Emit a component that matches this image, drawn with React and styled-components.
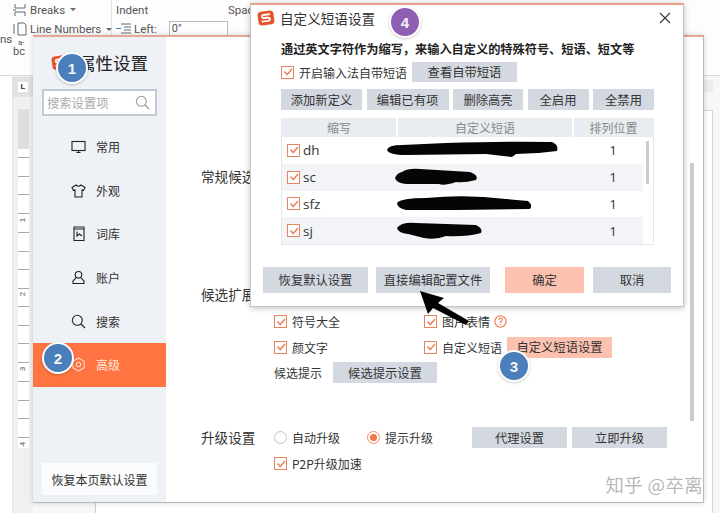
import React from "react";
import styled, { createGlobalStyle } from "styled-components";

const CJK = `"Noto Sans CJK SC", "Noto Sans", sans-serif`;

const GlobalStyle = createGlobalStyle`
  * { box-sizing: border-box; }
  html, body { margin: 0; padding: 0; background: #fff; overflow: hidden; }
  body { font-family: ${CJK}; }
`;

const Desktop = styled.div`
  position: relative;
  width: 720px;
  height: 513px;
  overflow: hidden;
  display: flex;
  flex-direction: column;
  background: #f7f7f7;
`;

/* word window behind the dialogs */
const Ribbon = styled.div`
  display: flex;
  height: 76px;
  flex-shrink: 0;
  background: #fdfdfd;
  border-bottom: 1px solid #dcdcdc;
  font-family: Roboto, sans-serif;
  font-size: 11.5px;
  color: #555;
`;

const RibbonEdge = styled.div`
  width: 13px;
  padding-top: 32px;
  line-height: 14px;
`;

const RibbonGroup = styled.div`
  width: ${(p) => p.$w}px;
  padding-left: ${(p) => p.$pad || 0}px;
  border-right: ${(p) => (p.$line ? "1px solid #e2e2e2" : "none")};
  display: flex;
  flex-direction: column;
`;

const RibbonRow = styled.div`
  height: 19.5px;
  display: flex;
  align-items: center;
  gap: 3px;
  white-space: nowrap;
  & svg { flex-shrink: 0; }
`;

const Caret = styled.span`
  width: 0;
  height: 0;
  margin-left: 2px;
  border-left: 3px solid transparent;
  border-right: 3px solid transparent;
  border-top: 3px solid #666;
`;

const HyphenMark = styled.div`
  & span { display: block; }
  & span:first-child { padding-left: 5px; font-size: 8px; line-height: 8px; }
  & span:last-child { font-size: 11px; line-height: 10px; }
`;

const SpinInput = styled.div`
  width: 61px;
  height: 16px;
  margin-left: 9px;
  border: 1px solid #bbb;
  background: #fff;
  padding-left: 2px;
  line-height: 14px;
  font-size: 11px;
`;

const Work = styled.div`
  flex: 1;
  display: flex;
`;

const Gutter = styled.div`
  width: 13px;
  border-right: 1px solid #e4e4e4;
  background: #fff;
`;

const Ruler = styled.div`
  width: 20px;
  display: flex;
  flex-direction: column;
  align-items: center;
  background: #f0f0f0;
`;

const RulerCorner = styled.div`
  width: 100%;
  height: 20px;
  margin-top: 1px;
  background: #e2e2e2;
  display: flex;
  align-items: center;
  justify-content: center;
  & span {
    width: 10px;
    height: 10px;
    background: #fff;
    font: bold 8px/10px "Liberation Sans", sans-serif;
    text-align: center;
    color: #333;
  }
`;

const RulerGray = styled.div`
  width: 11px;
  height: 40px;
  margin-top: 12px;
  background: #dedede;
`;

const RulerTick = styled.div`
  width: 11px;
  height: 74.7px;
  flex-shrink: 0;
  display: flex;
  align-items: flex-end;
  justify-content: center;
  background: repeating-linear-gradient(#fff 0 8px, #aaa 8px 9px, #fff 9px 18.7px);
  font: 8px/8px "Liberation Sans", sans-serif;
  color: #555;
  & span { transform: rotate(-90deg); background: #fff; }
`;

const PageColumn = styled.div`
  flex: 1;
  display: flex;
  flex-direction: column;
  margin-left: 62px;
  margin-right: 7px;
`;

const TopRuler = styled.div`
  height: 12px;
  margin-top: 4px;
  background: #ececec;
`;

const PageArea = styled.div`
  flex: 1;
  margin-top: 18px;
  background: #fff;
  border-top: 1px solid #d8d8d8;
  border-left: 1px solid #cfcfcf;
  border-right: 1px solid #d8d8d8;
`;

/* settings window */
const SettingsWindow = styled.div`
  position: absolute;
  left: 33px;
  top: 35px;
  width: 671px;
  height: 468px;
  display: flex;
  background: #fff;
  border-top: 2px solid #e6a695;
  border-right: 1px solid #b9b9b9;
  border-bottom: 1px solid #b9b9b9;
  box-shadow: 0 0 5px rgba(0, 0, 0, 0.18);
`;

const Sidebar = styled.aside`
  width: 133px;
  flex-shrink: 0;
  display: flex;
  flex-direction: column;
  background: #eef1f6;
  padding-bottom: 7px;
`;

const BrandRow = styled.div`
  height: 50px;
  padding-left: 18px;
  display: flex;
  align-items: center;
  gap: 10px;
  font-size: 17.5px;
  color: #222;
  white-space: nowrap;
`;

const SearchBox = styled.div`
  margin: 2px 9px 0 9px;
  height: 27px;
  border: 2px solid #c3c9d2;
  background: #fff;
  padding: 0 5px 0 3px;
  display: flex;
  align-items: center;
  justify-content: space-between;
  font-size: 12.3px;
  color: #aaa;
`;

const NavList = styled.nav`
  margin-top: 9px;
  display: flex;
  flex-direction: column;
`;

const NavItem = styled.div`
  height: 43.6px;
  display: flex;
  align-items: center;
  padding-left: 38px;
  gap: 10px;
  font-size: 12px;
  color: ${(p) => (p.$active ? "#ffe9df" : "#333")};
  background: ${(p) => (p.$active ? "#ff7440" : "transparent")};
`;

const ResetButton = styled.div`
  margin: auto 9px 0 9px;
  height: 32px;
  background: #fafbfc;
  display: flex;
  align-items: center;
  justify-content: center;
  font-size: 12px;
  color: #333;
`;

const Main = styled.main`
  position: relative;
  flex: 1;
  padding-left: 35px;
  display: flex;
  flex-direction: column;
  color: #333;
  font-size: 12px;
`;

const Section = styled.section`
  display: flex;
  margin-top: ${(p) => p.$top}px;
`;

const SectionLabel = styled.div`
  width: 73px;
  flex-shrink: 0;
  height: 20px;
  line-height: 20px;
  font-size: 13.6px;
  white-space: nowrap;
`;

const SectionBody = styled.div`
  display: flex;
  flex-direction: column;
  gap: ${(p) => p.$gap || 5}px;
  padding-top: ${(p) => p.$pad || 0}px;
`;

const OptionRow = styled.div`
  display: flex;
  align-items: center;
  height: 21px;
`;

const Option = styled.label`
  display: flex;
  align-items: center;
  gap: 5px;
  width: ${(p) => (p.$w ? `${p.$w}px` : "auto")};
  white-space: nowrap;
`;

const Box = styled.span`
  width: 13px;
  height: 13px;
  flex-shrink: 0;
  border: 1.5px solid #e9845f;
  background: #fff;
  display: flex;
  align-items: center;
  justify-content: center;
`;

const Radio = styled.span`
  width: 13px;
  height: 13px;
  flex-shrink: 0;
  border-radius: 50%;
  border: ${(p) => (p.$on ? "1.5px solid #ee8a66" : "1.5px solid #c4c4c4")};
  background: #fff;
  display: flex;
  align-items: center;
  justify-content: center;
  &::after {
    content: "";
    width: 7px;
    height: 7px;
    border-radius: 50%;
    background: ${(p) => (p.$on ? "#f0764a" : "transparent")};
  }
`;

const Button = styled.div`
  width: ${(p) => p.$w}px;
  height: ${(p) => p.$h || 21}px;
  margin-left: ${(p) => p.$ml || 0}px;
  flex-shrink: 0;
  display: flex;
  align-items: center;
  justify-content: center;
  background: ${(p) => (p.$hot ? "#fdc2af" : "#d4d9e1")};
  color: #333;
  font-size: 12.3px;
  white-space: nowrap;
`;

const Scrollbar = styled.div`
  position: absolute;
  right: 9px;
  top: 126px;
  bottom: 81px;
  width: 4px;
  background: #c9ccd1;
`;

const Watermark = styled.div`
  position: absolute;
  right: 0;
  bottom: 5px;
  font-size: 18.5px;
  line-height: 26px;
  color: rgba(120, 120, 120, 0.55);
  white-space: nowrap;
  letter-spacing: 0.3px;
`;

/* phrase dialog */
const Dialog = styled.div`
  position: absolute;
  left: 250px;
  top: 3px;
  width: 434px;
  height: 304px;
  display: flex;
  flex-direction: column;
  background: #fff;
  border-top: 2px solid #e6a08c;
  border-right: 1px solid #c4c4c4;
  border-bottom: 1px solid #c4c4c4;
  border-left: 1px solid #c4c4c4;
  box-shadow: 0 1px 6px rgba(0, 0, 0, 0.25);
  color: #333;
`;

const TitleBar = styled.div`
  height: 26px;
  padding: 0 12px 0 6px;
  display: flex;
  align-items: center;
  font-size: 13.6px;
  & > span { margin-left: 5px; flex: 1; }
`;

const DialogBody = styled.div`
  padding-left: 30px;
  display: flex;
  flex-direction: column;
  font-size: 12px;
`;

const Lead = styled.div`
  margin-top: 11px;
  height: 14px;
  line-height: 14px;
  font-size: 12.2px;
  font-weight: 700;
  color: #222;
  white-space: nowrap;
`;

const ToolRow = styled.div`
  margin-top: ${(p) => p.$top}px;
  display: flex;
  align-items: center;
  gap: ${(p) => p.$gap}px;
`;

const Table = styled.div`
  margin-top: 8px;
  width: 373px;
  height: 127px;
  border: 1px solid #e4e7ec;
  border-top: 0;
  position: relative;
  display: flex;
  flex-direction: column;
`;

const TableHead = styled.div`
  height: 19px;
  display: grid;
  grid-template-columns: 114px 174px 1fr;
  column-gap: 2px;
  font-size: 12px;
  color: #888;
  & > div {
    background: #e9edf2;
    text-align: center;
    line-height: 19px;
  }
`;

const TableRow = styled.div`
  height: 27px;
  width: 361px;
  display: grid;
  grid-template-columns: 104px 1fr 60px;
  align-items: center;
  background: ${(p) => (p.$alt ? "#f2f4f8" : "#fff")};
`;

const AbbrCell = styled.div`
  padding-left: 5px;
  display: flex;
  align-items: center;
  gap: 3px;
  font-family: "Open Sans", sans-serif;
  font-size: 13.5px;
  color: #333;
`;

const RankCell = styled.div`
  font-family: "Open Sans", sans-serif;
  font-size: 13.5px;
  text-align: center;
`;

const TableScroll = styled.div`
  position: absolute;
  right: 4px;
  top: 23px;
  width: 3px;
  height: 43px;
  background: #c9ccd1;
`;

const Footer = styled.div`
  margin-top: 22px;
  padding-left: 12px;
  display: flex;
  gap: 8px;
`;

/* overlays */
const Badge = styled.div`
  position: absolute;
  left: ${(p) => p.$x - 16}px;
  top: ${(p) => p.$y - 16}px;
  width: 32px;
  height: 32px;
  border-radius: 50%;
  border: 2px solid #fff;
  background: ${(p) => p.$color || "#4a7fbb"};
  box-shadow: 0 1px 3px rgba(0, 0, 0, 0.2);
  display: flex;
  align-items: center;
  justify-content: center;
  font: bold 15px "Liberation Sans", sans-serif;
  color: #f4f4f4;
`;

const ArrowMark = styled.svg`
  position: absolute;
  left: 415px;
  top: 286px;
`;

const Check = () => (
  <svg width="10" height="10" viewBox="0 0 10 10" fill="none">
    <path d="M1.5 4.5 L4.2 7.5 L9 2" stroke="#e9845f" strokeWidth="1.5" />
  </svg>
);

const CheckOption = ({ w, children }) => (
  <Option $w={w}>
    <Box>
      <Check />
    </Box>
    {children}
  </Option>
);

const Logo = ({ size = 18 }) => (
  <svg width={size} height={size} viewBox="0 0 18 18">
    <rect x="1" y="2" width="16" height="14" rx="3.5" fill="#e9532b" transform="rotate(-8 9 9)" />
    <path d="M13 5.2 L6.5 6 Q4.6 6.4 5 8 Q5.3 9.2 7 9 L11 8.6 Q13 8.6 13 10.2 Q13 11.6 11.2 11.9 L4.8 12.7" fill="none" stroke="#fff" strokeWidth="1.8" />
  </svg>
);

const SearchGlyph = ({ size = 15, color = "#9a9a9a" }) => (
  <svg width={size} height={size} viewBox="0 0 15 15" fill="none" stroke={color} strokeWidth="1.1">
    <circle cx="6.3" cy="6.3" r="5" />
    <path d="M10 10 L14 14" />
  </svg>
);

const navIcons = {
  monitor: (
    <>
      <rect x="1" y="2.5" width="13" height="9" />
      <path d="M7.5 11.5 V13.5 M5.5 13.5 H9.5" />
    </>
  ),
  shirt: <path d="M5 2 L1 4.5 L2.5 7.5 L4 6.8 V14 H11 V6.8 L12.5 7.5 L14 4.5 L10 2 Q7.5 4.5 5 2 Z" />,
  book: (
    <>
      <path d="M3 1 H13 V14.5 H3 Z M3 3 H13" />
      <path d="M6 5.5 V10 L8.5 8 L11 10" />
    </>
  ),
  user: (
    <>
      <circle cx="7.5" cy="4.8" r="3.3" />
      <path d="M5 7.8 L2 11 V13.5 H13 V11 L10 7.8" />
    </>
  ),
  gear: (
    <>
      <path d="M7.5 1 L13.2 4.2 V10.8 L7.5 14 L1.8 10.8 V4.2 Z" />
      <circle cx="7.5" cy="7.5" r="2.2" />
    </>
  ),
};

const NavIcon = ({ name, color = "#222" }) => (
  <svg width="15" height="15" viewBox="0 0 15 15" fill="none" stroke={color} strokeWidth="1.1">
    {navIcons[name]}
  </svg>
);

const navItems = [
  { icon: "monitor", label: "常用" },
  { icon: "shirt", label: "外观" },
  { icon: "book", label: "词库" },
  { icon: "user", label: "账户" },
  { icon: "search", label: "搜索" },
  { icon: "gear", label: "高级", active: true },
];

const rows = [
  { abbr: "dh", x: 0, d: "M1 9 Q2 4 16 4 L60 2 Q120 0 166 1 Q173 4 171 10 Q150 13 130 13 L126 16 L100 13 L20 14 Q3 14 1 9 Z" },
  { abbr: "sc", x: 8, d: "M1 10 Q3 5 8 4 Q14 0 26 1 L76 4 Q85 7 82 12 Q70 15 62 14 Q50 18 45 16 L12 16 Q2 15 1 10 Z" },
  { abbr: "sfz", x: 10, d: "M1 8 Q5 3 30 3 Q70 -1 110 4 L132 6 Q137 10 134 14 L60 15 L10 15 Q1 13 1 8 Z" },
  { abbr: "sj", x: 10, d: "M1 6 Q5 0 20 1 L80 3 Q87 6 85 11 Q70 15 50 14 Q40 18 28 16 L12 12 Q2 11 1 6 Z" },
];

const App = () => (
  <Desktop>
    <GlobalStyle />
    <Ribbon>
      <RibbonEdge>ns</RibbonEdge>
      <RibbonGroup $w={99} $line>
        <RibbonRow>
          <svg width="14" height="14" viewBox="0 0 14 14" fill="none" stroke="#667">
            <path d="M2 1 V5 H12 V1 M2 13 V9 H12 V13 M0 7 H3" />
          </svg>
          Breaks
          <Caret />
        </RibbonRow>
        <RibbonRow>
          <svg width="14" height="14" viewBox="0 0 14 14" fill="none" stroke="#667">
            <path d="M5 1 H11 L13 3 V13 H5 Z M1 2 V12" />
          </svg>
          Line Numbers
          <Caret />
        </RibbonRow>
        <HyphenMark>
          <span>a-</span>
          <span>bc</span>
        </HyphenMark>
      </RibbonGroup>
      <RibbonGroup $w={116} $pad={4}>
        <RibbonRow>Indent</RibbonRow>
        <RibbonRow>
          <svg width="15" height="12" viewBox="0 0 15 12" fill="none" stroke="#667">
            <path d="M5 1 H15 M8 4 H15 M8 7 H15 M5 10 H15" />
            <path d="M0 5.5 H5" stroke="#3a7fc4" />
          </svg>
          Left:
          <SpinInput>0"</SpinInput>
        </RibbonRow>
      </RibbonGroup>
      <RibbonGroup $w={40}>
        <RibbonRow>Spacing</RibbonRow>
      </RibbonGroup>
    </Ribbon>
    <Work>
      <Gutter />
      <Ruler>
        <RulerCorner>
          <span>L</span>
        </RulerCorner>
        <RulerGray />
        {[1, 2, 3, 4].map((n) => (
          <RulerTick key={n}>
            <span>{n}</span>
          </RulerTick>
        ))}
      </Ruler>
      <PageColumn>
        <TopRuler />
        <PageArea />
      </PageColumn>
    </Work>

    <SettingsWindow>
      <Sidebar>
        <BrandRow>
          <Logo size={17} />
          属性设置
        </BrandRow>
        <SearchBox>
          搜索设置项
          <SearchGlyph />
        </SearchBox>
        <NavList>
          {navItems.map((item) => (
            <NavItem key={item.label} $active={item.active}>
              {item.icon === "search" ? (
                <SearchGlyph color="#222" />
              ) : (
                <NavIcon name={item.icon} color={item.active ? "#ffd9c8" : "#222"} />
              )}
              {item.label}
            </NavItem>
          ))}
        </NavList>
        <ResetButton>恢复本页默认设置</ResetButton>
      </Sidebar>
      <Main>
        <Section $top={129}>
          <SectionLabel>常规候选</SectionLabel>
        </Section>
        <Section $top={98}>
          <SectionLabel>候选扩展</SectionLabel>
          <SectionBody $pad={27} $gap={4.5}>
            <OptionRow>
              <CheckOption w={150}>符号大全</CheckOption>
              <CheckOption>图片表情</CheckOption>
              <svg style={{ marginLeft: 4 }} width="13" height="13" viewBox="0 0 13 13" fill="none" stroke="#ee8a66" strokeWidth="1.3">
                <circle cx="6.5" cy="6.5" r="5.6" />
                <path d="M4.6 5 Q4.8 3.2 6.5 3.2 Q8.4 3.2 8.4 4.8 Q8.4 5.8 6.5 6.8 V8 M6.5 9 V10" />
              </svg>
            </OptionRow>
            <OptionRow>
              <CheckOption w={150}>颜文字</CheckOption>
              <CheckOption>自定义短语</CheckOption>
              <Button $w={105} $hot $ml={5}>自定义短语设置</Button>
            </OptionRow>
            <OptionRow>
              候选提示
              <Button $w={104} $ml={11}>候选提示设置</Button>
            </OptionRow>
          </SectionBody>
        </Section>
        <Section $top={44}>
          <SectionLabel>升级设置</SectionLabel>
          <SectionBody $gap={5}>
            <OptionRow>
              <Option $w={93}>
                <Radio />
                自动升级
              </Option>
              <Option $w={105}>
                <Radio $on />
                提示升级
              </Option>
              <Button $w={95}>代理设置</Button>
              <Button $w={95} $ml={5}>立即升级</Button>
            </OptionRow>
            <OptionRow>
              <CheckOption>P2P升级加速</CheckOption>
            </OptionRow>
          </SectionBody>
        </Section>
        <Scrollbar />
        <Watermark>知乎 @卒离</Watermark>
      </Main>
    </SettingsWindow>

    <Dialog>
      <TitleBar>
        <Logo />
        <span>自定义短语设置</span>
        <svg width="12" height="12" viewBox="0 0 12 12" stroke="#333" strokeWidth="1.1">
          <path d="M1 1 L11 11 M11 1 L1 11" />
        </svg>
      </TitleBar>
      <DialogBody>
        <Lead>通过英文字符作为缩写，来输入自定义的特殊符号、短语、短文等</Lead>
        <ToolRow $top={6} $gap={5}>
          <CheckOption>开启输入法自带短语</CheckOption>
          <Button $w={105} $h={20}>查看自带短语</Button>
        </ToolRow>
        <ToolRow $top={7} $gap={4.5}>
          <Button $w={81}>添加新定义</Button>
          <Button $w={82}>编辑已有项</Button>
          <Button $w={70}>删除高亮</Button>
          <Button $w={61}>全启用</Button>
          <Button $w={61}>全禁用</Button>
        </ToolRow>
        <Table>
          <TableHead>
            <div>缩写</div>
            <div>自定义短语</div>
            <div>排列位置</div>
          </TableHead>
          {rows.map((row, i) => (
            <TableRow key={row.abbr} $alt={i % 2 === 1}>
              <AbbrCell>
                <Box>
                  <Check />
                </Box>
                {row.abbr}
              </AbbrCell>
              <svg style={{ marginLeft: row.x }} width="172" height="18" viewBox="0 0 172 18">
                <path d={row.d} fill="#050505" />
              </svg>
              <RankCell>1</RankCell>
            </TableRow>
          ))}
          <TableScroll />
        </Table>
      </DialogBody>
      <Footer>
        <Button $w={105} $h={26}>恢复默认设置</Button>
        <Button $w={114} $h={26}>直接编辑配置文件</Button>
        <Button $w={79} $h={26} $hot $ml={7}>确定</Button>
        <Button $w={78} $h={26} $ml={1}>取消</Button>
      </Footer>
    </Dialog>

    <ArrowMark width="60" height="42" viewBox="0 0 60 42">
      <path d="M5 5 L29 12 L23 17 L54 35 L51 39 L18 22 L13 28 Z" fill="#000" />
    </ArrowMark>

    <Badge $x={72} $y={68}>1</Badge>
    <Badge $x={58} $y={358}>2</Badge>
    <Badge $x={514} $y={366}>3</Badge>
    <Badge $x={405} $y={22} $color="#8e5fb2">4</Badge>
  </Desktop>
);

export default App;
